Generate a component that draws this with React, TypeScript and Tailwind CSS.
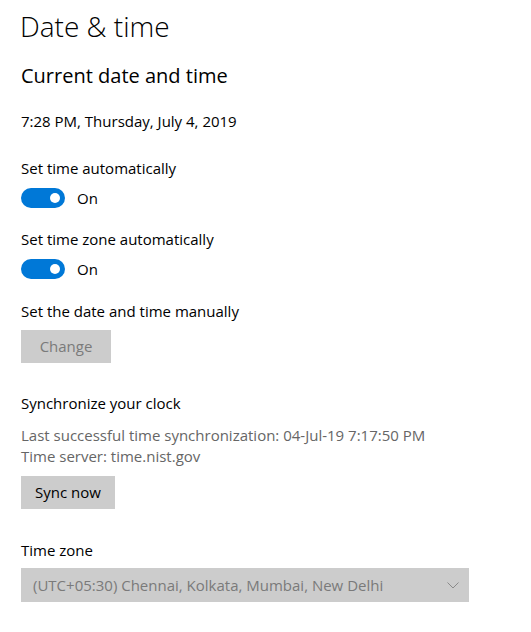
const Toggle = () => (
  <div className="flex items-center h-5">
    <div className="w-[44px] h-5 rounded-full bg-[#0078d7] flex items-center justify-end pr-[5px]">
      <div className="w-[10px] h-[10px] rounded-full bg-white" />
    </div>
    <span className="ml-3 text-[15px] leading-5">On</span>
  </div>
);

const App = () => {
  return (
    <div className="w-[531px] h-[632px] bg-white text-black font-['Open_Sans',sans-serif] pl-[21px] pt-[8px]">
      <h1 className="text-[28px] leading-[36px] font-light -ml-[1px]">Date &amp; time</h1>
      <h2 className="mt-[18px] text-[20px] leading-[28px]">Current date and time</h2>
      <p className="mt-[21px] text-[15px] leading-5">7:28 PM, Thursday, July 4, 2019</p>

      <p className="mt-[27px] text-[15px] leading-5">Set time automatically</p>
      <div className="mt-[10px]">
        <Toggle />
      </div>

      <p className="mt-[21px] text-[15px] leading-5">Set time zone automatically</p>
      <div className="mt-[10px]">
        <Toggle />
      </div>

      <p className="mt-[22px] text-[15px] leading-5">Set the date and time manually</p>
      <button className="mt-[9px] block w-[90px] h-[33px] bg-[#cccccc] text-[#7a7a7a] text-[15px]">
        Change
      </button>

      <p className="mt-[30px] text-[15px] leading-5">Synchronize your clock</p>
      <div className="mt-[12px] text-[15px] leading-[21px] text-[#666666]">
        <p>Last successful time synchronization: 04-Jul-19 7:17:50 PM</p>
        <p>Time server: time.nist.gov</p>
      </div>
      <button className="mt-[9px] block h-[33px] px-[14px] bg-[#cccccc] text-[15px] text-black">
        Sync now
      </button>

      <p className="mt-[31px] text-[15px] leading-5">Time zone</p>
      <div className="mt-[8px] w-[448px] h-[34px] bg-[#cccccc] flex items-center justify-between pl-[12px] pr-[10px] text-[15px] text-[#7a7a7a]">
        <span>(UTC+05:30) Chennai, Kolkata, Mumbai, New Delhi</span>
        <svg width="12" height="7" viewBox="0 0 12 7" fill="none" stroke="#8a8a8a" strokeWidth="1">
          <path d="M0.5 0.5 L6 6 L11.5 0.5" />
        </svg>
      </div>
    </div>
  );
};

export default App;
